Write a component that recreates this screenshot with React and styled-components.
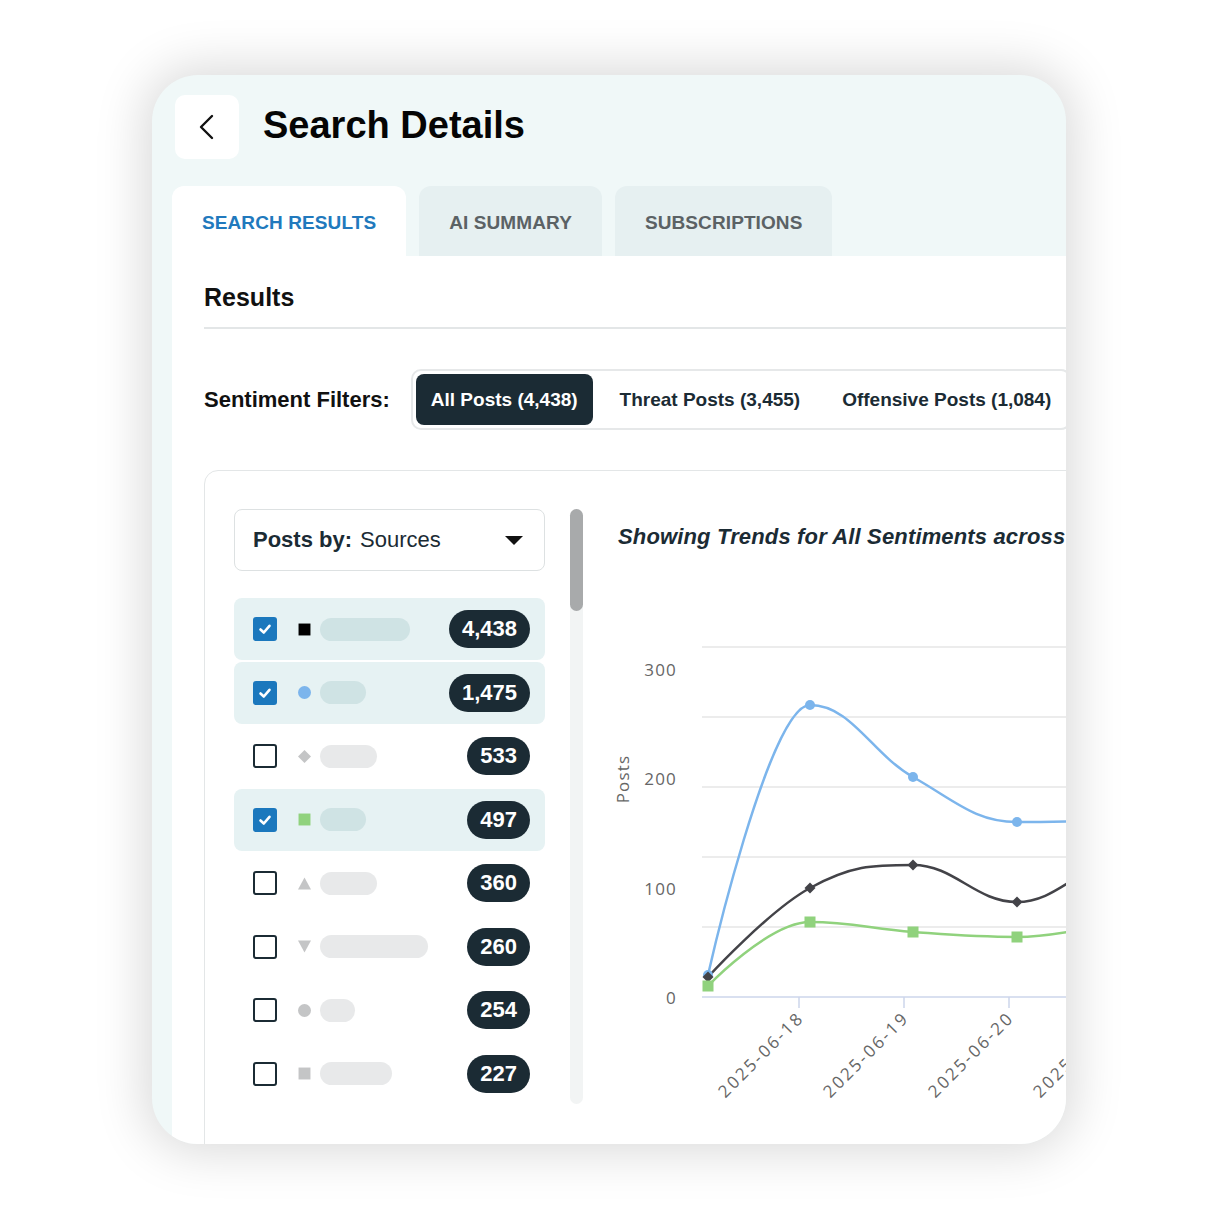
import React from 'react';
import styled, { createGlobalStyle } from 'styled-components';

const DARK = '#1b2b34';

const GlobalStyle = createGlobalStyle`
  body {
    margin: 0;
    background: #ffffff;
    font-family: "Liberation Sans", Arial, sans-serif;
  }
`;

const Page = styled.div`
  padding: 75px 0 76px 152px;
`;

const Card = styled.div`
  width: 914px;
  height: 1069px;
  box-sizing: border-box;
  padding-top: 20px;
  border-radius: 46px;
  background: #f0f8f8;
  overflow: hidden;
  box-shadow: 0 0 50px 8px rgba(0, 0, 0, 0.15);
`;

const Header = styled.div`
  display: flex;
  align-items: center;
  height: 64px;
  padding-left: 23px;
`;

const BackButton = styled.button`
  width: 64px;
  height: 64px;
  padding: 0;
  border: none;
  border-radius: 10px;
  background: #ffffff;
  display: flex;
  align-items: center;
  justify-content: center;
`;

const Title = styled.h1`
  margin: -4px 0 0 24px;
  font-size: 38px;
  font-weight: 700;
  color: #050505;
`;

const Tabs = styled.div`
  display: flex;
  gap: 13px;
  margin-top: 27px;
  padding-left: 20px;
`;

const Tab = styled.div`
  height: 70px;
  box-sizing: border-box;
  padding: 4px 30px 0;
  display: flex;
  align-items: center;
  border-radius: 12px 12px 0 0;
  background: ${p => (p.active ? '#ffffff' : '#e6f0f1')};
  color: ${p => (p.active ? '#2179bd' : '#5b6265')};
  font-size: 19px;
  font-weight: 700;
  letter-spacing: 0.1px;
  text-transform: uppercase;
`;

const Panel = styled.div`
  margin-left: 20px;
  width: 1150px;
  height: 900px;
  padding-left: 32px;
  box-sizing: border-box;
  background: #ffffff;
`;

const ResultsHeading = styled.h2`
  margin: 0;
  padding: 26px 0 15px;
  line-height: 30px;
  font-size: 25px;
  font-weight: 700;
  color: #111;
  border-bottom: 2px solid #e3e6e7;
`;

const FilterRow = styled.div`
  display: flex;
  align-items: center;
  margin-top: 40px;
`;

const FilterLabel = styled.span`
  margin-right: 21px;
  font-size: 22px;
  font-weight: 700;
  color: #111;
`;

const SegmentGroup = styled.div`
  display: flex;
  gap: 12px;
  padding: 3px;
  border: 2px solid #e6e8e9;
  border-radius: 10px;
`;

const Segment = styled.div`
  height: 51px;
  padding: 0 15px;
  display: flex;
  align-items: center;
  border-radius: 8px;
  background: ${p => (p.active ? DARK : 'transparent')};
  color: ${p => (p.active ? '#ffffff' : DARK)};
  font-size: 19px;
  font-weight: 700;
  white-space: nowrap;
`;

const ChartBox = styled.div`
  display: flex;
  height: 720px;
  margin-top: 40px;
  padding: 38px 0 0 29px;
  border: 1px solid #e3e6e7;
  border-radius: 14px;
  box-sizing: border-box;
`;

const Sidebar = styled.div`
  width: 311px;
  display: flex;
  flex-direction: column;
`;

const Dropdown = styled.div`
  height: 62px;
  box-sizing: border-box;
  padding: 0 21px 0 18px;
  display: flex;
  align-items: center;
  justify-content: space-between;
  border: 1px solid #dde1e2;
  border-radius: 8px;
  font-size: 22px;
  color: ${DARK};
`;

const DropdownLabel = styled.span`
  font-weight: 700;
  margin-right: 8px;
`;

const Caret = styled.span`
  width: 0;
  height: 0;
  border-left: 9px solid transparent;
  border-right: 9px solid transparent;
  border-top: 9px solid #111;
`;

const List = styled.div`
  display: flex;
  flex-direction: column;
  gap: 1.5px;
  margin-top: 27px;
`;

const Row = styled.div`
  height: 62px;
  padding: 0 15px 0 19px;
  display: flex;
  align-items: center;
  border-radius: 8px;
  background: ${p => (p.checked ? '#e6f2f3' : 'transparent')};
`;

const Checkbox = styled.span`
  width: 24px;
  height: 24px;
  box-sizing: border-box;
  margin-right: 21px;
  border-radius: 3px;
  display: flex;
  align-items: center;
  justify-content: center;
  background: ${p => (p.checked ? '#1b78bd' : '#ffffff')};
  border: ${p => (p.checked ? 'none' : `2.5px solid ${DARK}`)};
`;

const Marker = styled.svg`
  width: 13px;
  height: 13px;
  margin-right: 9px;
  flex: none;
`;

const NameBar = styled.span`
  height: 23px;
  border-radius: 12px;
  background: ${p => (p.checked ? '#cfe3e4' : '#e8e9ea')};
`;

const Badge = styled.span`
  margin-left: auto;
  height: 38px;
  line-height: 38px;
  padding: 0 13px;
  border-radius: 19px;
  background: ${DARK};
  color: #ffffff;
  font-size: 22px;
  font-weight: 700;
`;

const ScrollTrack = styled.div`
  width: 13px;
  height: 595px;
  margin-left: 25px;
  border-radius: 7px;
  background: #f2f4f4;
`;

const ScrollThumb = styled.div`
  height: 102px;
  border-radius: 7px;
  background: #a8aaab;
`;

const ChartColumn = styled.div`
  margin-left: 17px;
  display: flex;
  flex-direction: column;
`;

const ChartTitle = styled.div`
  margin: 14px 0 0 18px;
  line-height: 28px;
  font-size: 22px;
  font-weight: 700;
  font-style: italic;
  letter-spacing: 0.15px;
  color: ${DARK};
  white-space: nowrap;
`;

const ChartSvg = styled.svg`
  display: block;
  width: 560px;
  height: 580px;
`;

const AxisText = styled.text`
  font-family: "Open Sans", "DejaVu Sans", sans-serif;
  font-size: 17px;
  letter-spacing: ${p => p.spacing || '1.2px'};
  fill: #666666;
`;

const sources = [
  { count: '4,438', checked: true, marker: 'square', color: '#000000', bar: 90 },
  { count: '1,475', checked: true, marker: 'circle', color: '#7cb5ec', bar: 46 },
  { count: '533', checked: false, marker: 'diamond', color: '#c4c5c6', bar: 57 },
  { count: '497', checked: true, marker: 'square', color: '#90d27d', bar: 46 },
  { count: '360', checked: false, marker: 'triangle', color: '#c4c5c6', bar: 57 },
  { count: '260', checked: false, marker: 'triangle-down', color: '#c4c5c6', bar: 108 },
  { count: '254', checked: false, marker: 'circle', color: '#c4c5c6', bar: 35 },
  { count: '227', checked: false, marker: 'square', color: '#c4c5c6', bar: 72 },
];

function MarkerShape({ type, color }) {
  if (type === 'circle') return <circle cx="6" cy="6" r="6" fill={color} />;
  if (type === 'diamond') return <polygon points="6,0 12,6 6,12 0,6" fill={color} />;
  if (type === 'triangle') return <polygon points="6,0.5 12,11.5 0,11.5" fill={color} />;
  if (type === 'triangle-down') return <polygon points="0,0.5 12,0.5 6,11.5" fill={color} />;
  return <rect x="0.5" y="0.5" width="11" height="11" fill={color} />;
}

// highcharts style spline through points
function splinePath(pts) {
  const s = 1.5;
  const d = s + 1;
  let out = `M${pts[0][0]},${pts[0][1]}`;
  let prevRight = pts[0];
  for (let i = 1; i < pts.length; i++) {
    const [x, y] = pts[i];
    const [lx, ly] = pts[i - 1];
    let left = [x, y];
    let right = [x, y];
    if (i < pts.length - 1) {
      const [nx, ny] = pts[i + 1];
      const lcx = (s * x + lx) / d;
      let lcy = (s * y + ly) / d;
      const rcx = (s * x + nx) / d;
      let rcy = (s * y + ny) / d;
      const corr = ((rcy - lcy) * (rcx - x)) / (rcx - lcx) + y - rcy;
      lcy += corr;
      rcy += corr;
      if (lcy > ly && lcy > y) { lcy = Math.max(ly, y); rcy = 2 * y - lcy; }
      else if (lcy < ly && lcy < y) { lcy = Math.min(ly, y); rcy = 2 * y - lcy; }
      if (rcy > ny && rcy > y) { rcy = Math.max(ny, y); lcy = 2 * y - rcy; }
      else if (rcy < ny && rcy < y) { rcy = Math.min(ny, y); lcy = 2 * y - rcy; }
      left = [lcx, lcy];
      right = [rcx, rcy];
    }
    out += ` C${prevRight[0]},${prevRight[1]} ${left[0]},${left[1]} ${x},${y}`;
    prevRight = right;
  }
  return out;
}

const blue = [[708, 975], [810, 705], [913, 777], [1017, 822], [1120, 820], [1223, 815]];
const black = [[708, 977], [810, 888], [913, 865], [1017, 902], [1120, 862], [1223, 860]];
const green = [[708, 986], [810, 922], [913, 932], [1017, 937], [1120, 926], [1223, 925]];

function TrendChart() {
  const grid = [647, 717, 787, 857, 927];
  const yLabels = [['300', 676], ['200', 785], ['100', 895], ['0', 1004]];
  const ticks = [799, 904, 1009, 1114];
  const dates = ['2025-06-18', '2025-06-19', '2025-06-20', '2025-06-21'];
  return (
    <ChartSvg viewBox="0 0 560 580">
      <g transform="translate(-600,-551)">
        {grid.map(y => (
          <line key={y} x1="702" x2="1200" y1={y} y2={y} stroke="#e6e6e6" strokeWidth="1.5" />
        ))}
        <line x1="702" x2="1200" y1="997" y2="997" stroke="#ccd6eb" strokeWidth="1.5" />
        {ticks.map(x => (
          <line key={x} x1={x} x2={x} y1="997" y2="1008" stroke="#ccd6eb" strokeWidth="1.5" />
        ))}
        {yLabels.map(([t, y]) => (
          <AxisText key={t} x="677" y={y} textAnchor="end">{t}</AxisText>
        ))}
        <AxisText x="629" y="779" textAnchor="middle" transform="rotate(-90 629 779)">Posts</AxisText>
        {dates.map((t, i) => (
          <AxisText key={t} spacing="2.4px" x={ticks[i] + 6} y="1019" textAnchor="end" transform={`rotate(-45 ${ticks[i] + 6} 1019)`}>{t}</AxisText>
        ))}
        <path d={splinePath(blue)} fill="none" stroke="#7cb5ec" strokeWidth="2.5" />
        <path d={splinePath(black)} fill="none" stroke="#434348" strokeWidth="2.5" />
        <path d={splinePath(green)} fill="none" stroke="#90d27d" strokeWidth="2.5" />
        {blue.map(([x, y]) => <circle key={x} cx={x} cy={y} r="5" fill="#7cb5ec" />)}
        {black.map(([x, y]) => (
          <polygon key={x} points={`${x},${y - 5.5} ${x + 5.5},${y} ${x},${y + 5.5} ${x - 5.5},${y}`} fill="#434348" />
        ))}
        {green.map(([x, y]) => <rect key={x} x={x - 5.5} y={y - 5.5} width="11" height="11" fill="#90d27d" />)}
      </g>
    </ChartSvg>
  );
}

export default function App() {
  return (
    <Page>
      <GlobalStyle />
      <Card>
        <Header>
          <BackButton aria-label="Back">
            <svg width="24" height="30" viewBox="0 0 24 30">
              <polyline points="17,4 6,15 17,26" fill="none" stroke="#111" strokeWidth="2.4" strokeLinecap="round" strokeLinejoin="round" />
            </svg>
          </BackButton>
          <Title>Search Details</Title>
        </Header>

        <Tabs>
          <Tab active>Search Results</Tab>
          <Tab>AI Summary</Tab>
          <Tab>Subscriptions</Tab>
        </Tabs>

        <Panel>
          <ResultsHeading>Results</ResultsHeading>

          <FilterRow>
            <FilterLabel>Sentiment Filters:</FilterLabel>
            <SegmentGroup>
              <Segment active>All Posts (4,438)</Segment>
              <Segment>Threat Posts (3,455)</Segment>
              <Segment>Offensive Posts (1,084)</Segment>
            </SegmentGroup>
          </FilterRow>

          <ChartBox>
            <Sidebar>
              <Dropdown>
                <span>
                  <DropdownLabel>Posts by:</DropdownLabel>Sources
                </span>
                <Caret />
              </Dropdown>
              <List>
                {sources.map((s, i) => (
                  <Row key={i} checked={s.checked}>
                    <Checkbox checked={s.checked}>
                      {s.checked && (
                        <svg width="14" height="14" viewBox="0 0 14 14">
                          <polyline points="2.5,7.5 5.8,10.5 11.5,3.8" fill="none" stroke="#fff" strokeWidth="2.6" strokeLinecap="round" strokeLinejoin="round" />
                        </svg>
                      )}
                    </Checkbox>
                    <Marker viewBox="0 0 12 12">
                      <MarkerShape type={s.marker} color={s.color} />
                    </Marker>
                    <NameBar checked={s.checked} style={{ width: s.bar }} />
                    <Badge>{s.count}</Badge>
                  </Row>
                ))}
              </List>
            </Sidebar>

            <ScrollTrack>
              <ScrollThumb />
            </ScrollTrack>

            <ChartColumn>
              <ChartTitle>Showing Trends for All Sentiments across</ChartTitle>
              <TrendChart />
            </ChartColumn>
          </ChartBox>
        </Panel>
      </Card>
    </Page>
  );
}
